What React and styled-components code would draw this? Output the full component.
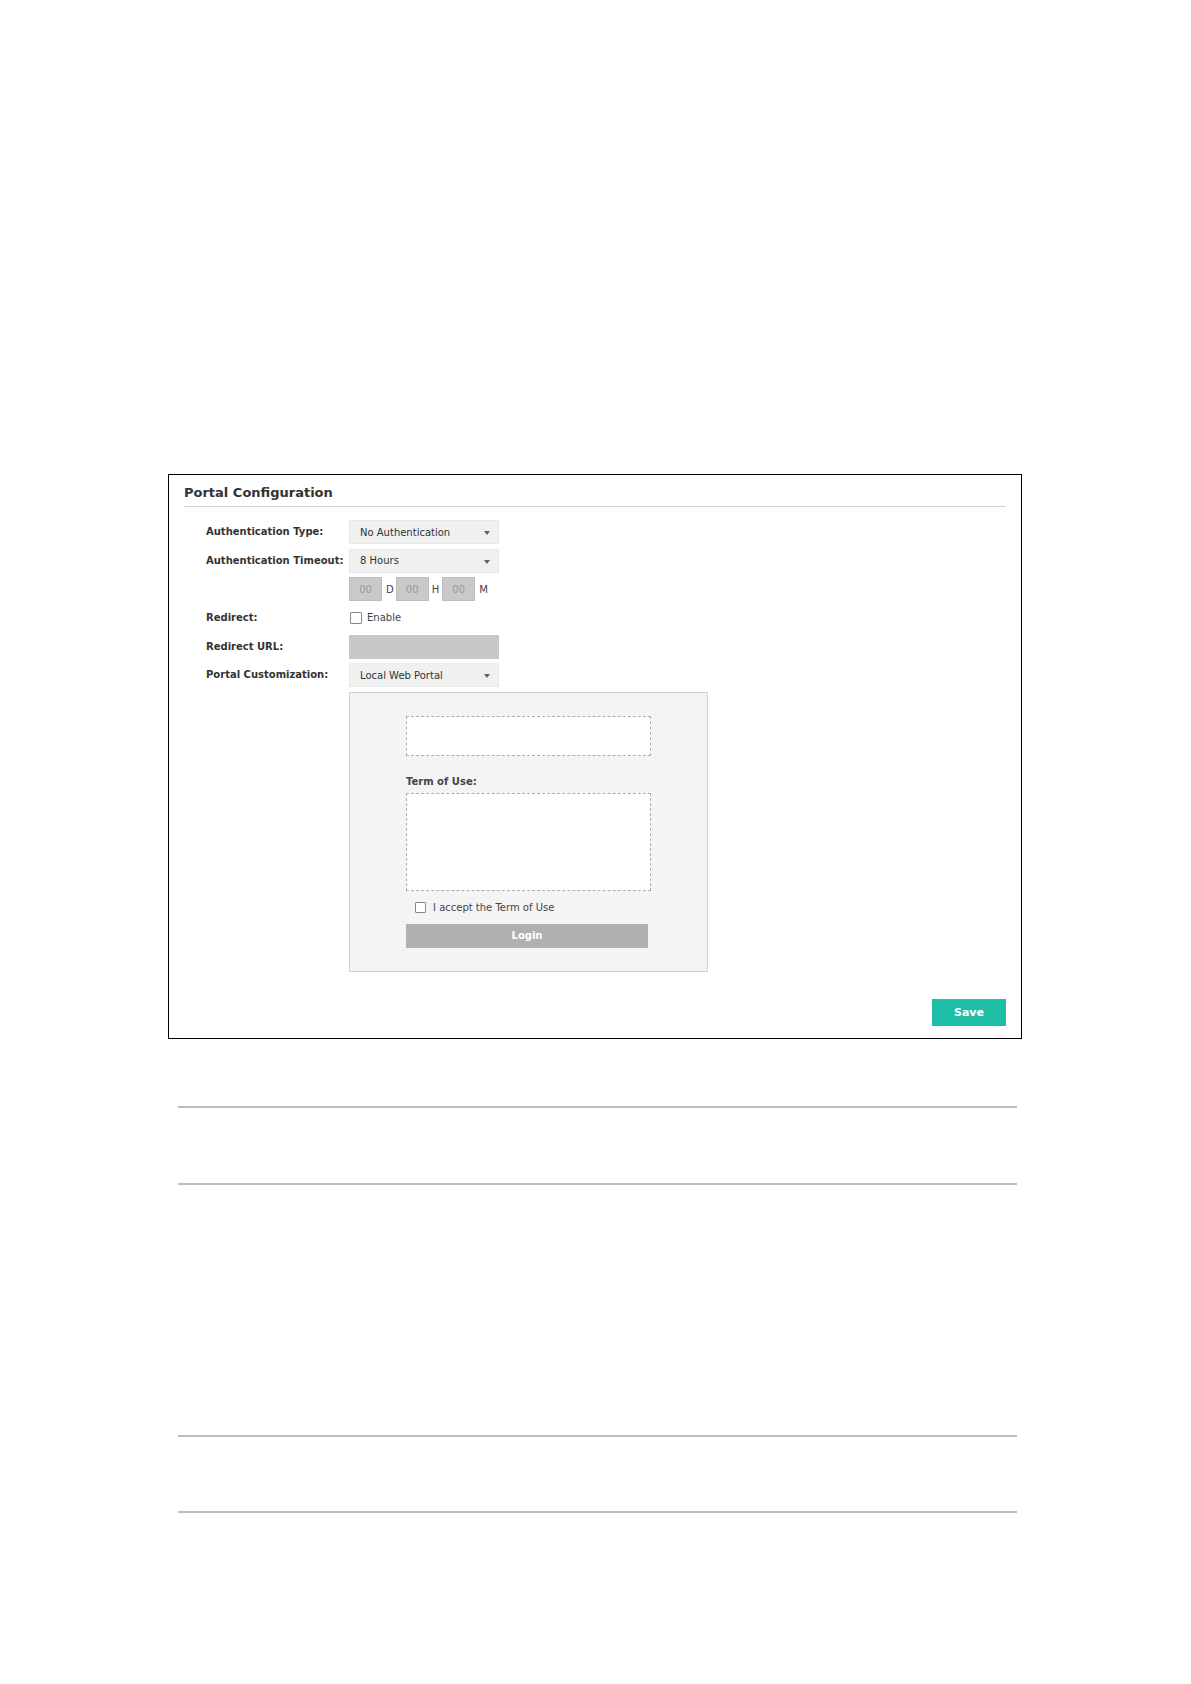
import React from "react";
import styled, { createGlobalStyle } from "styled-components";

const GlobalStyle = createGlobalStyle`
  html, body {
    margin: 0;
    padding: 0;
    background: #ffffff;
  }
  body {
    font-family: "DejaVu Sans", "Liberation Sans", sans-serif;
    color: #333333;
  }
`;

const Page = styled.div`
  width: 1191px;
  min-height: 1684px;
  box-sizing: border-box;
  padding: 474px 0 0 168px;
`;

const Panel = styled.section`
  width: 854px;
  height: 565px;
  box-sizing: border-box;
  border: 1px solid #000000;
  padding: 0 15px 12px 15px;
  display: flex;
  flex-direction: column;
`;

const Title = styled.h2`
  margin: 0;
  padding: 9px 0 5px 0;
  font-size: 13px;
  line-height: 17px;
  font-weight: bold;
  color: #333333;
  border-bottom: 1px solid #d4d4d4;
`;

const Form = styled.div`
  display: grid;
  grid-template-columns: 143px auto;
  grid-auto-rows: auto;
  row-gap: 4.67px;
  align-items: center;
  margin-top: 13px;
  padding-left: 22px;
`;

const Label = styled.div`
  font-size: 10px;
  font-weight: bold;
  color: #333333;
  line-height: 24px;
  white-space: nowrap;
`;

const Control = styled.div`
  display: flex;
  align-items: center;
  min-height: 24px;
  grid-column: 2;
`;

const Select = styled.div`
  position: relative;
  width: 150px;
  height: 24px;
  box-sizing: border-box;
  background: #f0f0f0;
  border: 1px solid #e8e8e8;
  padding-left: 10px;
  display: flex;
  align-items: center;
  font-size: 10px;
  color: #333333;
`;

const Arrow = styled.span`
  position: absolute;
  right: 8px;
  top: 10px;
  width: 0;
  height: 0;
  border-left: 3.5px solid transparent;
  border-right: 3.5px solid transparent;
  border-top: 4px solid #606060;
`;

const TimeBox = styled.div`
  width: 33px;
  height: 24px;
  box-sizing: border-box;
  background: #c9c9c9;
  border: 1px solid #bdbdbd;
  display: flex;
  align-items: center;
  justify-content: center;
  font-size: 10px;
  color: #9a9a9a;
`;

const Unit = styled.span`
  font-size: 10px;
  color: #444444;
  padding: 0 ${(p) => p.$right ?? 2}px 0 ${(p) => p.$left ?? 4}px;
`;

const CheckBox = styled.span`
  display: inline-block;
  width: ${(p) => p.$size || 12}px;
  height: ${(p) => p.$size || 12}px;
  box-sizing: border-box;
  border: 1px solid #8a8a8a;
  background: #ffffff;
  border-radius: 1px;
  margin-left: ${(p) => p.$ml ?? 1}px;
  margin-right: ${(p) => p.$mr ?? 5}px;
  flex: none;
`;

const CheckText = styled.span`
  font-size: 10px;
  color: #444444;
`;

const Disabled = styled.div`
  width: 150px;
  height: 24px;
  background: #c8c8c8;
`;

const Preview = styled.div`
  width: 359px;
  height: 280px;
  box-sizing: border-box;
  background: #f4f4f4;
  border: 1px solid #d2d2d2;
  padding: 23px 0 0 56px;
  display: flex;
  flex-direction: column;
  align-items: flex-start;
`;

const DashedArea = styled.div`
  width: 245px;
  height: ${(p) => p.$h}px;
  box-sizing: border-box;
  background: #ffffff;
  border: 1px dashed #adadad;
`;

const PreviewLabel = styled.div`
  margin: 20px 0 5px 0;
  font-size: 10px;
  line-height: 12px;
  font-weight: bold;
  color: #444444;
`;

const AcceptRow = styled.div`
  display: flex;
  align-items: center;
  margin-top: 11px;
  padding-left: 9px;
  height: 12px;
`;

const LoginButton = styled.div`
  margin-top: 10px;
  width: 242px;
  height: 24px;
  background: #b0b0b0;
  color: #ffffff;
  font-size: 10px;
  font-weight: bold;
  display: flex;
  align-items: center;
  justify-content: center;
`;

const Footer = styled.div`
  margin-top: auto;
  display: flex;
  justify-content: flex-end;
`;

const SaveButton = styled.button`
  width: 74px;
  height: 27px;
  border: none;
  background: #1fbfa7;
  color: #ffffff;
  font-family: inherit;
  font-size: 11px;
  font-weight: bold;
  padding: 0;
  cursor: pointer;
`;

const Rule = styled.hr`
  margin: ${(p) => p.$top}px 0 0 10px;
  width: 839px;
  height: 2px;
  border: none;
  background: #bdbdbd;
`;

export default function App() {
  return (
    <>
      <GlobalStyle />
      <Page>
        <Panel>
          <Title>Portal Configuration</Title>
          <Form>
            <Label>Authentication Type:</Label>
            <Control>
              <Select>
                No Authentication
                <Arrow />
              </Select>
            </Control>

            <Label>Authentication Timeout:</Label>
            <Control>
              <Select>
                8 Hours
                <Arrow />
              </Select>
            </Control>

            <Control>
              <TimeBox>00</TimeBox>
              <Unit>D</Unit>
              <TimeBox>00</TimeBox>
              <Unit $left={3} $right={3}>H</Unit>
              <TimeBox>00</TimeBox>
              <Unit $left={4}>M</Unit>
            </Control>

            <Label>Redirect:</Label>
            <Control>
              <CheckBox />
              <CheckText>Enable</CheckText>
            </Control>

            <Label>Redirect URL:</Label>
            <Control>
              <Disabled />
            </Control>

            <Label>Portal Customization:</Label>
            <Control>
              <Select>
                Local Web Portal
                <Arrow />
              </Select>
            </Control>

            <Control>
              <Preview>
                <DashedArea $h={40} />
                <PreviewLabel>Term of Use:</PreviewLabel>
                <DashedArea $h={98} />
                <AcceptRow>
                  <CheckBox $size={11} $ml={0} $mr={7} />
                  <CheckText>I accept the Term of Use</CheckText>
                </AcceptRow>
                <LoginButton>Login</LoginButton>
              </Preview>
            </Control>
          </Form>
          <Footer>
            <SaveButton>Save</SaveButton>
          </Footer>
        </Panel>
        <Rule $top={67} />
        <Rule $top={75} />
        <Rule $top={250} />
        <Rule $top={74} />
      </Page>
    </>
  );
}
